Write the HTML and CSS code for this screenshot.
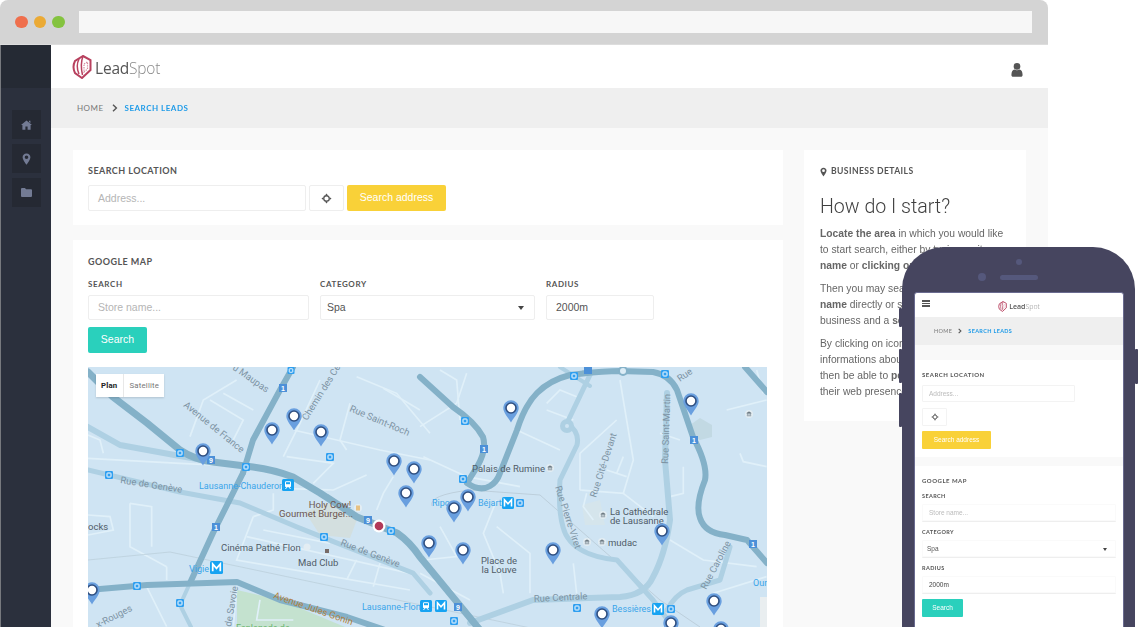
FILE: index.html
```html
<!DOCTYPE html>
<html lang="en">
<head>
    <meta charset="UTF-8">
    <title>LeadSpot - Search leads</title>
    <link rel="stylesheet" href="styles.css">
</head>
<body>

<svg class="defs" width="0" height="0">
    <defs>
        <g id="map-pin">
            <path d="M0 14.5 C-2 10.5 -7.7 5 -7.7 0 A7.7 7.7 0 1 1 7.7 0 C7.7 5 2 10.5 0 14.5 Z" fill="#699fdf"/>
            <circle r="5" fill="#fff" stroke="#2f4f80" stroke-width="1.6"/>
        </g>
    </defs>
    <symbol id="logo-mark" viewBox="0 0 20 24">
        <path d="M11 1 L18.5 5 L18.5 15 L10 23 L3 18 Q0 12 3 6 Z" fill="none" stroke="#b8415f" stroke-width="2"/>
        <path d="M7 4 Q3.5 11 7 19 M11 1 Q8 9 10.5 20" fill="none" stroke="#b8415f" stroke-width="1.5"/>
        <path d="M12 9 L15.5 7 V14 L12 17 Z" fill="none" stroke="#d58a9c" stroke-width="1.2" stroke-dasharray="1.4 1"/>
    </symbol>
    <symbol id="pin-small" viewBox="0 0 12 16">
        <path d="M6 0.5 C2.7 0.5 0.8 2.9 0.8 5.5 C0.8 9 6 15.5 6 15.5 C6 15.5 11.2 9 11.2 5.5 C11.2 2.9 9.3 0.5 6 0.5 Z M6 3.3 A2.4 2.4 0 1 1 6 8.1 A2.4 2.4 0 1 1 6 3.3 Z" fill-rule="evenodd" fill="currentColor"/>
    </symbol>
    <symbol id="locate" viewBox="0 0 12 12">
        <circle cx="6" cy="6" r="3" fill="none" stroke="#555" stroke-width="1.4"/>
        <path d="M6 0.5 L7.5 2.5 L4.5 2.5 Z M6 11.5 L7.5 9.5 L4.5 9.5 Z M0.5 6 L2.5 4.5 L2.5 7.5 Z M11.5 6 L9.5 4.5 L9.5 7.5 Z" fill="#555"/>
    </symbol>
    <symbol id="bus" viewBox="0 0 8 8">
        <rect width="8" height="8" rx="1.2" fill="#2f9ff0"/>
        <rect x="2" y="2" width="4" height="4" rx=".6" fill="none" stroke="#fff" stroke-width="1"/>
    </symbol>
    <symbol id="metro" viewBox="0 0 12 12">
        <rect width="12" height="12" rx="1.5" fill="#16a3f2"/>
        <path d="M2.5 9.5 V2.8 L6 6.8 L9.5 2.8 V9.5" fill="none" stroke="#fff" stroke-width="1.6"/>
    </symbol>
    <symbol id="train" viewBox="0 0 12 12">
        <rect width="12" height="12" rx="1.5" fill="#16a3f2"/>
        <rect x="3" y="2.2" width="6" height="6" rx="1.2" fill="#fff"/>
        <rect x="4" y="3.2" width="4" height="2" fill="#16a3f2"/>
        <path d="M3.5 10 L4.8 8.2 M8.5 10 L7.2 8.2" stroke="#fff" stroke-width="1"/>
    </symbol>
    <symbol id="museum" viewBox="0 0 8 8">
        <circle cx="4" cy="4" r="4" fill="#e3edf3"/>
        <path d="M1.8 3.2 L4 1.8 L6.2 3.2 Z M2.4 3.6 V5.4 M4 3.6 V5.4 M5.6 3.6 V5.4 M1.8 5.8 H6.2" fill="#67737c" stroke="#67737c" stroke-width=".6"/>
    </symbol>
</svg>

<div class="stage">
    <div class="browser">
        <div class="chrome">
            <span class="dot dot-red"></span>
            <span class="dot dot-orange"></span>
            <span class="dot dot-green"></span>
            <div class="url-bar"></div>
        </div>

        <div class="app">
            <aside class="sidebar">
                <div class="sidebar-top"></div>
                <nav class="side-nav">
                    <a class="side-btn">
                        <svg width="11" height="10" viewBox="0 0 11 10"><path d="M5.5 .5 L11 5 L9.6 5 L9.6 9.8 L6.6 9.8 L6.6 6.6 L4.4 6.6 L4.4 9.8 L1.4 9.8 L1.4 5 L0 5 Z M8 .8 H9.4 V3 L8 2 Z" fill="#737b94"/></svg>
                    </a>
                    <a class="side-btn">
                        <svg class="side-pin" width="9" height="12"><use href="#pin-small"/></svg>
                    </a>
                    <a class="side-btn">
                        <svg width="11" height="9" viewBox="0 0 11 9"><path d="M0 1 Q0 0 1 0 H4 L5 1.2 H10 Q11 1.2 11 2.2 V8 Q11 9 10 9 H1 Q0 9 0 8 Z" fill="#737b94"/></svg>
                    </a>
                </nav>
            </aside>

            <div class="main">
                <header class="topbar">
                    <div class="logo">
                        <svg class="logo-mark" width="20" height="24"><use href="#logo-mark"/></svg>
                        <span class="logo-text"><span class="logo-lead">Lead</span><span class="logo-spot">Spot</span></span>
                    </div>
                    <svg class="user-icon" width="12" height="14" viewBox="0 0 12 14">
                        <circle cx="6" cy="3.4" r="3.3" fill="#555"/>
                        <path d="M0.4 12 C0.4 8.6 1.8 7 3.4 6.6 C5 7.6 7 7.6 8.6 6.6 C10.2 7 11.6 8.6 11.6 12 C11.6 13.2 10.8 13.8 10 13.8 H2 C1.2 13.8 0.4 13.2 0.4 12 Z" fill="#555"/>
                    </svg>
                </header>

                <div class="crumbs">
                    <span class="crumb">HOME</span>
                    <svg class="crumb-arrow" width="6" height="8" viewBox="0 0 6 8"><path d="M1 .8 L4.4 4 L1 7.2" fill="none" stroke="#555" stroke-width="1.4"/></svg>
                    <span class="crumb crumb-active">SEARCH LEADS</span>
                </div>

                <div class="content">
                    <div class="col-left">
                        <section class="card card-location">
                            <h4 class="card-title">SEARCH LOCATION</h4>
                            <div class="row">
                                <div class="field field-address placeholder">Address...</div>
                                <div class="field field-locate"><svg width="11" height="11"><use href="#locate"/></svg></div>
                                <div class="btn btn-yellow">Search address</div>
                            </div>
                        </section>

                        <section class="card card-map">
                            <h4 class="card-title">GOOGLE MAP</h4>
                            <div class="form-grid">
                                <div>
                                    <label class="label">SEARCH</label>
                                    <div class="field placeholder">Store name...</div>
                                </div>
                                <div>
                                    <label class="label">CATEGORY</label>
                                    <div class="field field-select">Spa<span class="caret"></span></div>
                                </div>
                                <div>
                                    <label class="label">RADIUS</label>
                                    <div class="field">2000m</div>
                                </div>
                            </div>
                            <div class="btn btn-teal">Search</div>

                            <div class="map">
                                <svg class="map-svg" width="679" height="260" viewBox="88 367 679 260">
                                    <rect x="88" y="367" width="679" height="260" fill="#cfe4f3"/>

                                    <!-- parks and blocks -->
                                    <path d="M237 590 L280 600 L345 627 L237 627 Z" fill="#c4e2cf"/>
                                    <path d="M305 512 L330 502 L358 517 L350 538 L320 535 Z" fill="#d3dfdf"/>
                                    <path d="M690 425 L700 418 L712 425 L712 437 L700 440 L690 436 Z" fill="#c2d9e3"/>
                                    <path d="M582 505 L600 500 L605 525 L585 525 Z" fill="#d5e5ec"/>
                                    <rect x="760" y="597" width="7" height="30" fill="#e9eef0"/>

                                    <!-- minor streets, traced at 3x -->
                                    <g transform="translate(80 360) scale(.3333)" fill="none" stroke="#e0f0f9" stroke-width="5">
                                        <path d="M24 295 L300 310 L400 315"/>
                                        <path d="M330 230 L370 120 L470 60"/>
                                        <path d="M390 120 L490 180 L460 240"/>
                                        <path d="M430 100 L520 150"/>
                                        <path d="M640 210 L900 270 L1050 300"/>
                                        <path d="M720 60 L660 190 L610 290"/>
                                        <path d="M810 130 L780 240 L800 270"/>
                                        <path d="M910 85 L1020 150"/>
                                        <path d="M830 50 L950 100 L1050 220"/>
                                        <path d="M620 290 L760 310 L700 370"/>
                                        <path d="M860 345 L760 390 L600 385"/>
                                        <path d="M150 430 L215 440 L215 560"/>
                                        <path d="M150 430 L150 560 L260 620"/>
                                        <path d="M24 465 L90 470 L100 510 L24 525"/>
                                        <path d="M520 470 L470 600 L990 690"/>
                                        <path d="M500 530 L990 640"/>
                                        <path d="M580 400 L580 450 L520 470"/>
                                        <path d="M550 510 L750 550"/>
                                        <path d="M260 620 L260 660"/>
                                        <path d="M470 690 L460 800"/>
                                        <path d="M540 720 L530 780 L640 780"/>
                                        <path d="M830 600 L800 660 M900 610 L880 680"/>
                                        <path d="M940 350 L910 400 L890 450"/>
                                        <path d="M24 225 L60 240 L70 280"/>
                                        <path d="M200 680 L260 800"/>
                                    </g>
                                    <g transform="translate(420 360) scale(.3333)" fill="none" stroke="#e0f0f9" stroke-width="5">
                                        <path d="M0 200 L110 130 L140 40"/>
                                        <path d="M10 290 L140 350 L300 380"/>
                                        <path d="M60 30 L110 60 L120 180"/>
                                        <path d="M290 210 L420 270"/>
                                        <path d="M380 130 L420 90 L470 110"/>
                                        <path d="M380 150 L460 180"/>
                                        <path d="M600 60 L640 300 L610 400 L480 390"/>
                                        <path d="M590 180 L480 280 L480 390"/>
                                        <path d="M560 330 L620 350"/>
                                        <path d="M610 290 L590 340"/>
                                        <path d="M610 400 L700 470"/>
                                        <path d="M750 410 L790 400 L790 320"/>
                                        <path d="M720 220 L780 240"/>
                                        <path d="M920 150 L1040 120"/>
                                        <path d="M960 280 L970 305 L1040 320"/>
                                        <path d="M1010 30 L1030 100"/>
                                        <path d="M230 420 L190 520 L240 640 L250 700"/>
                                        <path d="M60 500 L110 590 L10 600"/>
                                        <path d="M230 500 L330 580 L330 700"/>
                                        <path d="M460 610 L470 700"/>
                                        <path d="M750 540 L850 600 L1010 620"/>
                                        <path d="M880 700 L1040 650"/>
                                        <path d="M500 400 L490 440 L520 480"/>
                                        <path d="M0 640 L150 720"/>
                                    </g>
                                    <path d="M88 560 L170 552 L350 590 L540 630" fill="none" stroke="#b9cdd9" stroke-width=".7"/>
                                    <path d="M432 506 Q428 495 470 490 L540 495 L660 600 L700 627" fill="none" stroke="#b4c6d1" stroke-width=".7"/>

                                    <!-- secondary roads -->
                                    <g fill="none" stroke="#aed0e3" stroke-linejoin="round" stroke-linecap="round">
                                        <path stroke-width="5" d="M88 470 L180 492 L240 503 L297 527 L347 547 L413 573 L430 593"/>
                                        <path stroke-width="6" d="M88 427 L120 445 L180 456 L215 462"/>
                                        <path stroke-width="5" d="M590 375 L567 423 Q580 432 577 445 L560 480 Q558 510 563 527 Q570 555 617 560 L653 600 L673 627"/>
                                        <path stroke-width="6" d="M667 393 L665 460 L670 520 Q665 555 653 577 Q645 595 620 597 L533 600 L470 623"/>
                                        <path stroke-width="5" d="M667 610 Q675 595 687 590 L720 580 L730 547"/>
                                        <path stroke-width="4" d="M191 627 L180 605 L190 583"/>
                                        <path stroke-width="4" d="M560 367 L590 386"/>
                                    </g>
                                    <circle cx="567" cy="426" r="7" fill="#aed0e3"/>
                                    <circle cx="567" cy="426" r="2" fill="#cfe4f3"/>

                                    <!-- main roads -->
                                    <g fill="none" stroke="#84b1c8" stroke-linejoin="round" stroke-linecap="round">
                                        <path stroke-width="7" d="M88 372 L113 397 L147 423 L180 450 Q195 460 213 462 L253 467 Q275 470 293 477 L320 493 L357 517 L397 533 Q410 542 420 557 L480 630"/>
                                        <path stroke-width="6" d="M293 367 L280 390 L253 440 L243 473"/>
                                        <path stroke-width="6" d="M243 473 L213 533 L190 583"/>
                                        <path stroke-width="6" d="M88 590 L147 585 L237 582 L280 600 L347 617 L385 630"/>
                                        <path stroke-width="6" d="M420 377 L453 407 Q475 422 483 437 Q487 450 477 467 L467 483 Q480 492 490 486 Q497 482 500 473 L517 430 Q525 405 537 393 Q550 380 570 375 Q600 371 620 371 L653 372 Q670 375 677 390 L693 437 Q708 465 705 480 Q695 505 700 518 Q705 533 725 535 L747 540 L767 563"/>
                                        <path stroke-width="6" d="M745 367 L767 392"/>
                                    </g>
                                    <circle cx="623" cy="371" r="4" fill="#dcecf6" stroke="#84b1c8" stroke-width="2"/>

                                    <!-- route badges -->
                                    <g class="badge-group">
                                        <rect x="279" y="384" width="8" height="8"/><rect x="212" y="523" width="8" height="8"/>
                                        <rect x="584" y="367" width="8" height="7"/><rect x="480" y="445" width="8" height="8"/>
                                        <rect x="690" y="436" width="8" height="8"/><rect x="749" y="540" width="8" height="8"/>
                                        <rect x="207" y="456" width="8" height="8"/><rect x="364" y="516" width="8" height="8"/>
                                        <rect x="454" y="603" width="8" height="8"/>
                                    </g>
                                    <g class="badge-text">
                                        <text x="283" y="391">1</text><text x="216" y="530">1</text><text x="484" y="452">1</text>
                                        <text x="694" y="443">1</text><text x="753" y="547">1</text><text x="211" y="463">9</text>
                                        <text x="368" y="523">9</text><text x="458" y="610">9</text>
                                    </g>

                                    <!-- stop icons -->
                                    <use href="#bus" x="287" y="367" width="8" height="7"/><use href="#bus" x="176" y="449" width="8" height="8"/>
                                    <use href="#bus" x="242" y="463" width="8" height="8"/><use href="#bus" x="105" y="471" width="8" height="8"/>
                                    <use href="#bus" x="326" y="453" width="8" height="8"/><use href="#bus" x="387" y="527" width="8" height="8"/>
                                    <use href="#bus" x="320" y="533" width="8" height="8"/><use href="#bus" x="133" y="582" width="8" height="8"/>
                                    <use href="#bus" x="176" y="599" width="8" height="8"/><use href="#bus" x="461" y="417" width="8" height="8"/>
                                    <use href="#bus" x="459" y="475" width="8" height="8"/><use href="#bus" x="570" y="372" width="8" height="8"/>
                                    <use href="#bus" x="661" y="370" width="8" height="8"/><use href="#bus" x="516" y="499" width="8" height="8"/>
                                    <use href="#bus" x="573" y="604" width="8" height="8"/><use href="#bus" x="667" y="605" width="8" height="8"/>
                                    <use href="#bus" x="450" y="617" width="8" height="8"/>
                                    <use href="#train" x="282" y="479" width="12" height="12"/><use href="#train" x="420" y="600" width="12" height="12"/>
                                    <use href="#metro" x="210" y="561" width="13" height="13"/><use href="#metro" x="502" y="497" width="12" height="12"/>
                                    <use href="#metro" x="435" y="600" width="12" height="12"/><use href="#metro" x="652" y="603" width="12" height="12"/>
                                    <use href="#museum" x="546" y="464" width="8" height="8"/><use href="#museum" x="583" y="538" width="8" height="8"/>
                                    <use href="#museum" x="598" y="538" width="8" height="8"/><use href="#museum" x="599" y="511" width="8" height="8"/>
                                    <use href="#museum" x="745" y="410" width="8" height="8"/>
                                    <circle cx="307" cy="547" r="3.5" fill="#e3edf3"/>
                                    <rect x="325" y="549" width="4" height="4" fill="#776a66"/>
                                    <circle cx="358" cy="508" r="4" fill="#e3edf3"/>
                                    <path d="M357 505.5 V510.5 M359 505.5 V510.5" stroke="#e8a33a" stroke-width="1.2"/>

                                    <!-- labels -->
                                    <g class="map-label">
                                        <text x="330" y="508" text-anchor="middle" class="lb-food">Holy Cow!</text>
                                        <text x="279" y="517" class="lb-food">Gourmet Burger...</text>
                                        <text x="221" y="551">Cinéma Pathé Flon</text>
                                        <text x="298" y="566">Mad Club</text>
                                        <text x="472" y="472">Palais de Rumine</text>
                                        <text x="610" y="515">La Cathédrale</text>
                                        <text x="610" y="524">de Lausanne</text>
                                        <text x="608" y="546">mudac</text>
                                        <text x="499" y="564" text-anchor="middle">Place de</text>
                                        <text x="499" y="573" text-anchor="middle">la Louve</text>
                                        <text x="88" y="530">ocks</text>
                                    </g>
                                    <g class="map-label lb-stop">
                                        <text x="199" y="489">Lausanne-Chauderon</text>
                                        <text x="189" y="572">Vigie</text>
                                        <text x="362" y="610">Lausanne-Flon</text>
                                        <text x="432" y="506">Ripo</text>
                                        <text x="478" y="506">Béjart</text>
                                        <text x="612" y="612">Bessières</text>
                                        <text x="753" y="586">Our</text>
                                    </g>
                                    <g class="map-label lb-road">
                                        <text transform="translate(120 483) rotate(9)">Rue de Genève</text>
                                        <text transform="translate(340 545) rotate(21)">Rue de Genève</text>
                                        <text transform="translate(183 406) rotate(39)">Avenue de France</text>
                                        <text transform="translate(307 421) rotate(-58)">Chemin des Cèdres</text>
                                        <text transform="translate(349 411) rotate(23)">Rue Saint-Roch</text>
                                        <text transform="translate(232 369) rotate(35)">u Maupas</text>
                                        <text transform="translate(98 628) rotate(-27)">x-Rouges</text>
                                        <text transform="translate(231 627) rotate(-80)">de Savoie</text>
                                        <text transform="translate(555 487) rotate(72)">Rue Pierre-Viret</text>
                                        <text transform="translate(596 498) rotate(-72)">Rue Cité-Devant</text>
                                        <text transform="translate(668 464) rotate(-88)">Rue Saint-Martin</text>
                                        <text transform="translate(534 602) rotate(-3)">Rue Centrale</text>
                                        <text transform="translate(706 590) rotate(-62)">Rue Caroline</text>
                                        <text transform="translate(680 382) rotate(-35)">Rue</text>
                                    </g>
                                    <text transform="translate(273 598) rotate(19)" class="lb-avenue">Avenue Jules Gonin</text>
                                    <text x="236" y="631" class="lb-park">Esplanade de</text>

                                    <!-- result pins -->
                                    <use href="#map-pin" x="203" y="451"/><use href="#map-pin" x="272" y="430"/>
                                    <use href="#map-pin" x="294" y="416"/><use href="#map-pin" x="321" y="432"/>
                                    <use href="#map-pin" x="394" y="461"/><use href="#map-pin" x="414" y="469"/>
                                    <use href="#map-pin" x="406" y="493"/><use href="#map-pin" x="429" y="543"/>
                                    <use href="#map-pin" x="92" y="590"/><use href="#map-pin" x="511" y="408"/>
                                    <use href="#map-pin" x="691" y="401"/><use href="#map-pin" x="468" y="497"/>
                                    <use href="#map-pin" x="454" y="508"/><use href="#map-pin" x="463" y="550"/>
                                    <use href="#map-pin" x="553" y="550"/><use href="#map-pin" x="662" y="531"/>
                                    <use href="#map-pin" x="714" y="601"/><use href="#map-pin" x="602" y="614"/>
                                    <use href="#map-pin" x="671" y="623"/><use href="#map-pin" x="721" y="629"/>

                                    <circle cx="379" cy="526" r="6.5" fill="#fff"/>
                                    <circle cx="379" cy="526" r="4.3" fill="#b23a59"/>
                                </svg>

                                <div class="map-toggle">
                                    <span class="toggle-item toggle-on">Plan</span>
                                    <span class="toggle-item">Satellite</span>
                                </div>
                            </div>
                        </section>
                    </div>

                    <section class="card card-details">
                        <h4 class="card-title details-title"><svg class="details-pin" width="7" height="10"><use href="#pin-small"/></svg>BUSINESS DETAILS</h4>
                        <h2 class="details-heading">How do I start?</h2>
                        <p><b>Locate the area</b> in which you would like to start search, either by typing a city <b>name</b> or <b>clicking on the map</b>.</p>
                        <p>Then you may search for a specific<br><b>name</b> directly or select a type of<br>business and a <b>search radius</b>.</p>
                        <p>By clicking on icons, you will get informations about a business. You will then be able to <b>perform</b> a search on<br>their web presence.</p>
                    </section>
                </div>
            </div>
        </div>
    </div>

    <!-- phone mockup lying over the browser -->
    <div class="phone">
        <span class="phone-key key-1"></span>
        <span class="phone-key key-2"></span>
        <span class="phone-key key-3"></span>
        <span class="phone-key key-4"></span>
        <div class="phone-top">
            <span class="phone-camera"></span>
            <span class="phone-sensor"></span>
            <span class="phone-speaker"></span>
        </div>
        <div class="screen">
            <div class="m-header">
                <span class="m-burger"></span>
                <div class="m-logo">
                    <svg width="9" height="11"><use href="#logo-mark"/></svg>
                    <span><span class="logo-lead">Lead</span><span class="logo-spot">Spot</span></span>
                </div>
            </div>
            <div class="m-crumbs">
                <span class="crumb">HOME</span>
                <svg width="4" height="6" viewBox="0 0 6 8"><path d="M1 .8 L4.4 4 L1 7.2" fill="none" stroke="#555" stroke-width="1.6"/></svg>
                <span class="crumb crumb-active">SEARCH LEADS</span>
            </div>
            <div class="m-spacer"></div>
            <div class="m-card m-card-location">
                <h4 class="m-title">SEARCH LOCATION</h4>
                <div class="m-field m-address m-placeholder">Address...</div>
                <div class="m-field m-locate"><svg width="8" height="8"><use href="#locate"/></svg></div>
                <div class="m-btn m-yellow">Search address</div>
            </div>
            <div class="m-gap"></div>
            <div class="m-card m-card-map">
                <h4 class="m-title">GOOGLE MAP</h4>
                <label class="m-label">SEARCH</label>
                <div class="m-field m-wide m-placeholder">Store name...</div>
                <label class="m-label">CATEGORY</label>
                <div class="m-field m-wide m-select">Spa<span class="caret m-caret"></span></div>
                <label class="m-label">RADIUS</label>
                <div class="m-field m-wide m-value">2000m</div>
                <div class="m-btn m-teal">Search</div>
                <div class="m-map"></div>
            </div>
        </div>
    </div>
</div>

</body>
</html>
```
FILE: styles.css
```css
* {
    box-sizing: border-box;
}

html, body {
    margin: 0;
    height: 100%;
    overflow: hidden;
    background: #ffffff;
}

body {
    font-family: "Liberation Sans", Arial, sans-serif;
    color: #555;
}

.defs {
    position: absolute;
}

.stage {
    position: relative;
    width: 1138px;
    height: 627px;
    overflow: hidden;
}

.browser {
    width: 1048px;
    height: 627px;
    border-radius: 8px 8px 0 0;
    overflow: hidden;
    display: flex;
    flex-direction: column;
    filter: blur(0.3px); /* the shot is a bit soft */
}

/* Window chrome */
.chrome {
    height: 45px;
    flex: none;
    background: #d4d4d4;
    border-bottom: 1px solid #dddddd;
    display: flex;
    align-items: flex-start;
    padding: 15.5px 0 0 15px;
}

.dot {
    width: 12.5px;
    height: 12.5px;
    border-radius: 50%;
    margin-right: 6.2px;
}

.dot-red { background: #ef6f4d; }
.dot-orange { background: #ebaa35; }
.dot-green { background: #84c33f; }

.url-bar {
    width: 953px;
    height: 22px;
    margin: -4.5px 0 0 7.9px;
    background: #f7f7f7;
}

.app {
    flex: 1;
    display: flex;
    min-height: 0;
}

/* Sidebar */
.sidebar {
    width: 51px;
    flex: none;
    background: #2b303d;
    border-left: 1px solid #77797e;
}

.sidebar-top {
    height: 43px;
    background: #252a34;
}

.side-nav {
    display: flex;
    flex-direction: column;
    gap: 5px;
    padding: 22px 0 0 11px;
}

.side-btn {
    width: 29px;
    height: 29px;
    background: #252933;
    display: flex;
    align-items: center;
    justify-content: center;
}

.side-pin {
    color: #737b94;
}

/* Main column */
.main {
    flex: 1;
    min-width: 0;
    background: #f9f9f9;
    display: flex;
    flex-direction: column;
}

.topbar {
    height: 43px;
    flex: none;
    background: #fff;
    display: flex;
    align-items: center;
    justify-content: space-between;
    padding: 0 25px 0 21px;
}

.logo {
    display: flex;
    align-items: center;
    gap: 3px;
}

.logo-text {
    font-family: "Open Sans", sans-serif;
    font-size: 15.5px;
    letter-spacing: -0.2px;
    padding-top: 3px;
}

.logo-lead { color: #555; }
.logo-spot { color: #8a8a8a; font-weight: 300; }

.user-icon {
    margin-top: 6px;
}

.crumbs {
    height: 40px;
    flex: none;
    background: #efefef;
    display: flex;
    align-items: center;
    padding-left: 26px;
}

.crumb {
    font-family: "Lato", sans-serif;
    font-size: 8px;
    letter-spacing: .5px;
    color: #777;
}

.crumb-arrow {
    margin: 0 7px 0 8px;
}

.crumb-active {
    font-weight: 700;
    color: #1f9be8;
}

.content {
    flex: 1;
    min-height: 0;
    display: flex;
    align-items: flex-start;
    gap: 21px;
    padding: 22px 22px 0;
    overflow: hidden;
}

.col-left {
    width: 710px;
    flex: none;
    display: flex;
    flex-direction: column;
    gap: 15px;
}

.card {
    background: #fff;
    padding: 15px;
}

.card-location {
    height: 75px;
}

.card-map {
    height: 400px;
}

.card-title {
    margin: 0;
    font-family: "Lato", sans-serif;
    font-size: 9px;
    line-height: 11px;
    font-weight: 700;
    letter-spacing: .45px;
    color: #555;
}

.card-location .row {
    margin-top: 9px;
}

.row {
    display: flex;
    gap: 3px;
}

.field {
    height: 25px;
    border: 1px solid #eeeeee;
    border-radius: 2px;
    background: #fff;
    font-size: 10.5px;
    line-height: 23px;
    padding: 0 9px;
    color: #555;
}

.placeholder {
    color: #b5b5b5;
}

.field-address {
    width: 218px;
    height: 26px;
    line-height: 24px;
}

.field-locate {
    width: 35px;
    height: 26px;
    padding: 0;
    display: flex;
    align-items: center;
    justify-content: center;
}

.btn {
    color: #fff;
    font-size: 10.5px;
    border-radius: 2px;
    text-align: center;
    height: 26px;
    line-height: 25px;
}

.btn-yellow {
    width: 99px;
    background: #f9d138;
}

.btn-teal {
    width: 59px;
    background: #2ad0bc;
    margin-top: 7px;
}

.card-map .card-title {
    margin-top: 1px;
}

.form-grid {
    display: grid;
    grid-template-columns: 221px 215px 108px;
    gap: 11px;
    margin-top: 12px;
}

.label {
    display: block;
    font-family: "Lato", sans-serif;
    font-size: 8px;
    line-height: 10px;
    font-weight: 700;
    letter-spacing: .6px;
    color: #555;
    margin-bottom: 6px;
}

.field-select {
    position: relative;
    padding-left: 6px;
}

.caret {
    position: absolute;
    right: 10px;
    top: 10px;
    border-left: 3.5px solid transparent;
    border-right: 3.5px solid transparent;
    border-top: 4px solid #444;
}

.map {
    position: relative;
    width: 679px;
    height: 260px;
    margin-top: 14px;
    overflow: hidden;
}

.map-svg {
    display: block;
}

.map-toggle {
    position: absolute;
    top: 7px;
    left: 8px;
    display: flex;
    background: #fff;
    height: 23px;
    box-shadow: 0 1px 2px rgba(0, 0, 0, 0.15);
}

.toggle-item {
    font-family: "Roboto", sans-serif;
    font-size: 7.8px;
    line-height: 23px;
    padding: 0 5px;
    color: #777;
    letter-spacing: .2px;
}

.toggle-on {
    color: #222;
    font-weight: 700;
    border-right: 1px solid #e8e8e8;
    padding-right: 6px;
}

/* Map text */
.map-label text {
    font-family: "Roboto", sans-serif;
    font-size: 9.5px;
    fill: #4f5c68;
}

.map-label .lb-food {
    fill: #6c5650;
}

.map-label.lb-stop text {
    fill: #3aa4ea;
    font-size: 9px;
}

.map-label.lb-road text {
    fill: #7d93a3;
    font-size: 9.5px;
}

.lb-avenue {
    font-family: "Roboto", sans-serif;
    font-size: 9.5px;
    fill: #b2813f;
}

.lb-park {
    font-family: "Roboto", sans-serif;
    font-size: 9px;
    fill: #6cb56e;
}

.badge-group rect {
    fill: #4c90d8;
}

.badge-text text {
    font-family: "Liberation Sans", sans-serif;
    font-size: 7px;
    font-weight: 700;
    fill: #fff;
    text-anchor: middle;
}

/* Business details */
.card-details {
    width: 222px;
    height: 271px;
    flex: none;
    padding: 15px 15px 0 16px;
}

.details-title {
    display: flex;
    align-items: center;
    gap: 4px;
    margin-top: 1px;
    font-size: 8.6px;
    letter-spacing: .4px;
}

.details-pin {
    color: #555;
}

.details-heading {
    margin: 18px 0 7px;
    font-family: "Roboto", sans-serif;
    font-size: 19.6px;
    line-height: 24px;
    font-weight: 300;
    color: #3f3f3f;
}

.card-details p {
    margin: 7px 0 0;
    font-size: 10.3px;
    line-height: 16px;
    color: #666;
}

.details-heading + p {
    margin-top: 0;
}

/* Phone */
.phone {
    position: absolute;
    left: 902px;
    top: 247px;
    width: 233px;
    height: 430px;
    background: #46455f;
    border-radius: 42px 42px 0 0;
}

.phone-key {
    position: absolute;
    width: 3px;
    background: #46455f;
    border-radius: 1px;
}

.key-1 { left: -3px; top: 61px; height: 19px; }
.key-2 { left: -3px; top: 102px; height: 34px; }
.key-3 { left: -3px; top: 146px; height: 34px; }
.key-4 { right: -3px; top: 102px; height: 35px; }

.phone-top {
    position: relative;
    height: 45px;
}

.phone-camera {
    position: absolute;
    left: 114px;
    top: 12px;
    width: 6px;
    height: 6px;
    border-radius: 50%;
    background: #55587c;
}

.phone-sensor {
    position: absolute;
    left: 76px;
    top: 26px;
    width: 8px;
    height: 8px;
    border-radius: 50%;
    background: #55587c;
}

.phone-speaker {
    position: absolute;
    left: 98px;
    top: 28px;
    width: 38px;
    height: 5px;
    border-radius: 3px;
    background: #55587c;
}

.screen {
    margin: 0 11px 0 12px;
    width: 210px;
    background: #fff;
    border: 1px solid #6a6b90;
    border-radius: 3px 3px 0 0;
    filter: blur(0.3px);
}

.m-header {
    position: relative;
    height: 24px;
    display: flex;
    align-items: center;
    justify-content: center;
}

.m-burger {
    position: absolute;
    left: 7px;
    top: 7px;
    width: 8px;
    height: 7px;
    border-top: 2px solid #555;
    border-bottom: 2px solid #555;
    background: linear-gradient(#555, #555) center / 100% 1px no-repeat;
}

.m-logo {
    display: flex;
    align-items: center;
    gap: 2px;
    font-family: "Open Sans", sans-serif;
    font-size: 7px;
    font-weight: 600;
    padding-top: 2px;
}

.m-crumbs {
    height: 28px;
    background: #efefef;
    display: flex;
    align-items: center;
    gap: 6px;
    padding-left: 19px;
}

.m-crumbs .crumb {
    font-size: 5.5px;
    letter-spacing: .35px;
}

.m-spacer {
    height: 15px;
    background: #f9f9f9;
}

.m-gap {
    height: 9px;
    background: #f9f9f9;
}

.m-card {
    padding: 0 7px;
}

.m-card-location {
    height: 97px;
    padding-top: 11px;
}

.m-card-map {
    padding-top: 11px;
}

.m-title {
    margin: 0;
    font-family: "Lato", sans-serif;
    font-size: 6px;
    line-height: 8px;
    font-weight: 700;
    letter-spacing: .5px;
    color: #555;
}

.m-field {
    height: 17px;
    border: 1px solid #f3f3f3;
    border-radius: 1px;
    font-size: 6.5px;
    line-height: 15px;
    padding: 0 6px;
    color: #555;
}

.m-placeholder {
    color: #bbbbbb;
}

.m-address {
    width: 153px;
    margin-top: 6px;
}

.m-locate {
    width: 25px;
    height: 18px;
    margin-top: 6px;
    padding: 0;
    display: flex;
    align-items: center;
    justify-content: center;
}

.m-btn {
    color: #fff;
    font-size: 6.5px;
    height: 18px;
    line-height: 17px;
    text-align: center;
    border-radius: 1px;
}

.m-yellow {
    width: 69px;
    margin-top: 5px;
    background: #f9d138;
}

.m-teal {
    width: 41px;
    margin-top: 6px;
    background: #2ad0bc;
}

.m-label {
    display: block;
    font-family: "Lato", sans-serif;
    font-size: 5.5px;
    line-height: 7px;
    font-weight: 700;
    letter-spacing: .4px;
    color: #555;
    margin-top: 8px;
    margin-bottom: 4px;
}

.m-wide {
    width: 194px;
    border-color: #fafafa;
    box-shadow: 0 1px 0 #eeeeee;
}

.m-select {
    position: relative;
    padding-left: 4px;
}

.m-caret {
    right: 8px;
    top: 7px;
    border-left-width: 2.5px;
    border-right-width: 2.5px;
    border-top-width: 3px;
}

.m-value {
    color: #444;
}

.m-map {
    width: 196px;
    height: 20px;
    margin: 10px 0 0 -1px;
    background: #cfe4f3;
}
```
